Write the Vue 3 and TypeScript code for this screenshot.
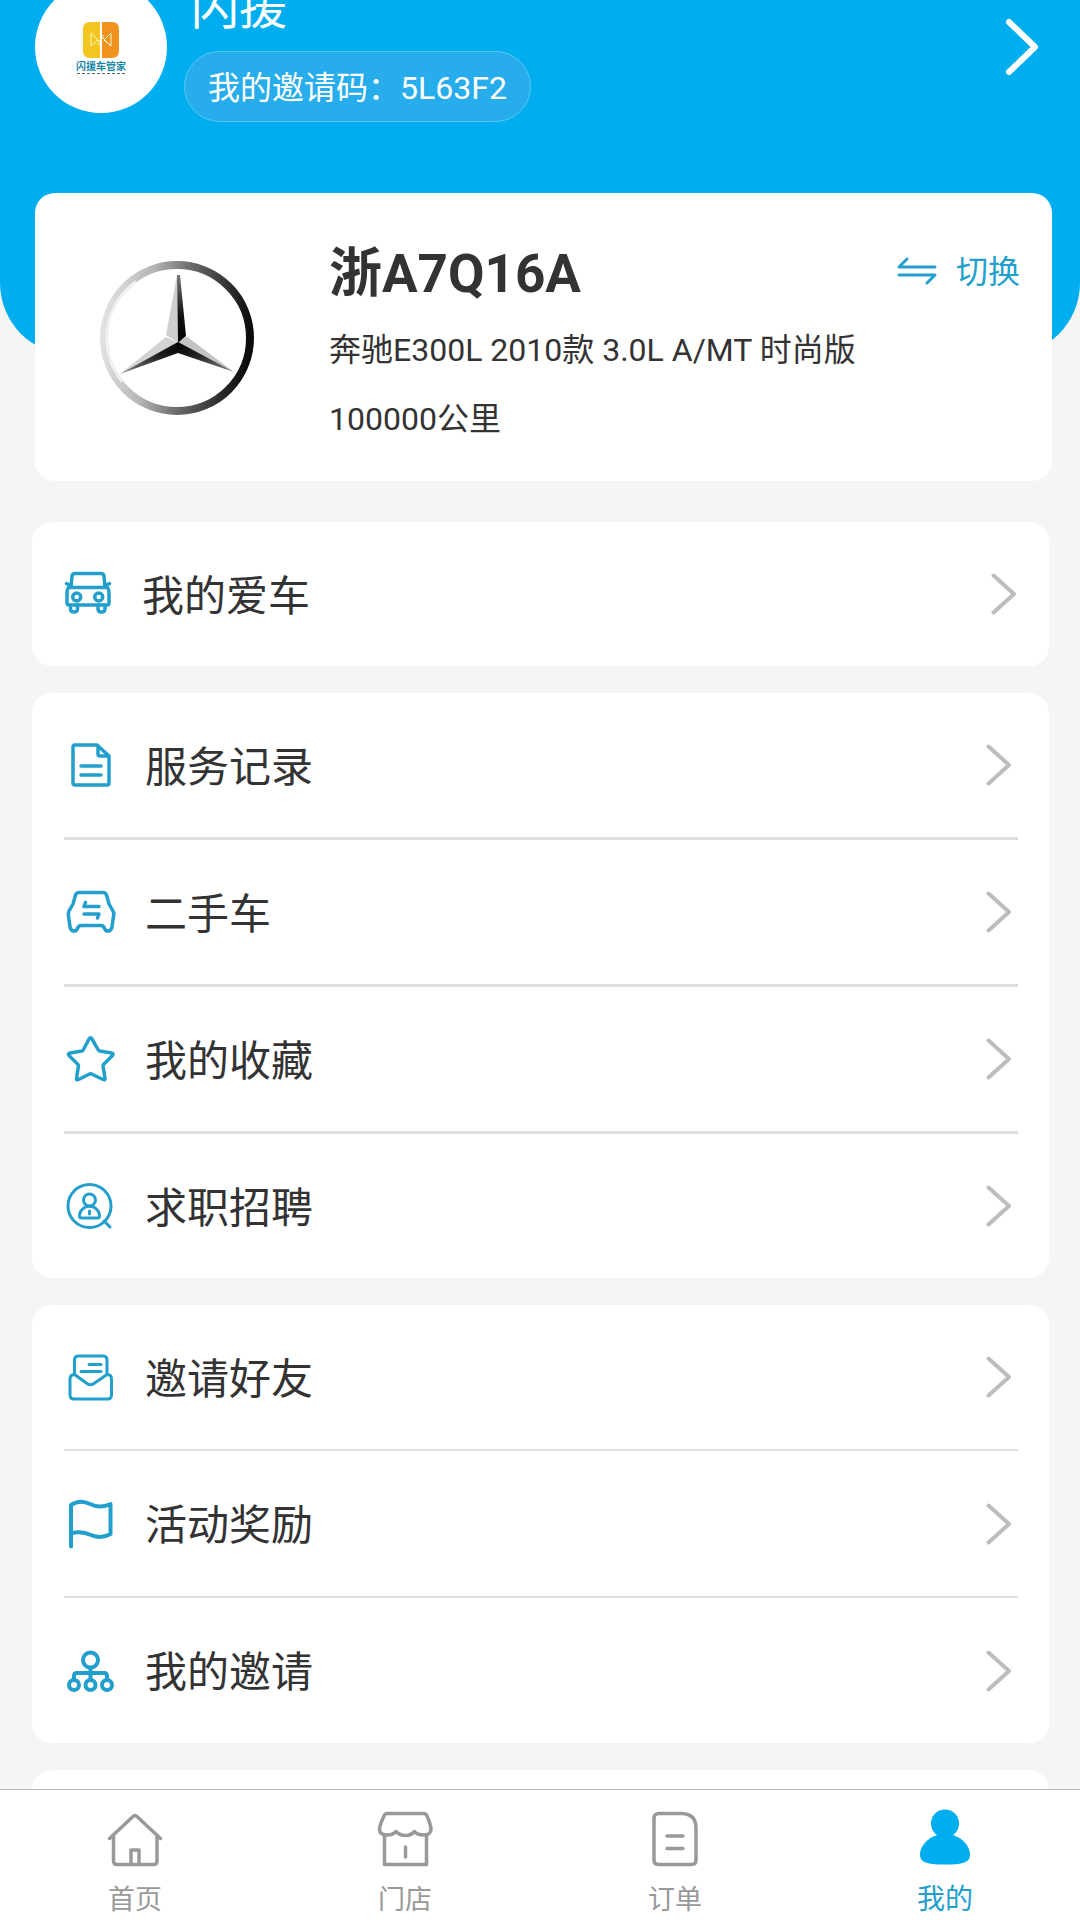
<script setup lang="ts">
import { ref } from 'vue'

type IconName = 'car' | 'doc' | 'trade' | 'star' | 'job' | 'mail' | 'flag' | 'tree'

interface MenuItem {
  icon: IconName
  label: string
}

interface MenuGroup {
  id: string
  items: MenuItem[]
}

interface Tab {
  id: 'home' | 'store' | 'order' | 'me'
  label: string
}

const groups: MenuGroup[] = [
  { id: 'single', items: [{ icon: 'car', label: '我的爱车' }] },
  {
    id: 'service',
    items: [
      { icon: 'doc', label: '服务记录' },
      { icon: 'trade', label: '二手车' },
      { icon: 'star', label: '我的收藏' },
      { icon: 'job', label: '求职招聘' },
    ],
  },
  {
    id: 'invite',
    items: [
      { icon: 'mail', label: '邀请好友' },
      { icon: 'flag', label: '活动奖励' },
      { icon: 'tree', label: '我的邀请' },
    ],
  },
  { id: 'more', items: [] },
]

const tabs: Tab[] = [
  { id: 'home', label: '首页' },
  { id: 'store', label: '门店' },
  { id: 'order', label: '订单' },
  { id: 'me', label: '我的' },
]

const activeTab = ref<Tab['id']>('me')
</script>

<template>
  <div class="app">
    <main class="content">
      <header class="hero">
        <div class="profile">
          <div class="avatar">
            <svg class="avatar-mark" viewBox="0 0 36 36" aria-hidden="true">
              <path d="M17 0H7Q0 0 0 7V29Q0 36 7 36H17Z" fill="#f3c71f" />
              <path d="M19 0H29Q36 0 36 7V29Q36 36 29 36H19Z" fill="#f0921e" />
              <path
                d="M8 11V24L15 18ZM28 11V24L21 18ZM8 11L16 19L20 16L28 24M15 23L21 13"
                fill="none"
                stroke="#fff3c4"
                stroke-width="1"
              />
            </svg>
            <span class="avatar-name">闪援车管家</span>
            <span class="avatar-line"></span>
          </div>
          <div class="identity">
            <h1 class="name">闪援</h1>
            <p class="code">我的邀请码：5L63F2</p>
          </div>
          <a class="profile-link" href="#profile" aria-label="个人资料">
            <svg width="34" height="58" viewBox="0 0 34 58">
              <path d="M4 4L30 29L4 54" fill="none" stroke="#fff" stroke-width="6" stroke-linecap="round" stroke-linejoin="round" />
            </svg>
          </a>
        </div>
      </header>

      <section class="vehicle">
        <svg class="brand" viewBox="0 0 160 160" aria-hidden="true">
          <defs>
            <linearGradient id="ring" x1="0" y1="0.4" x2="1" y2="0.5">
              <stop offset="0" stop-color="#e2e2e2" />
              <stop offset="0.3" stop-color="#b4b4b4" />
              <stop offset="0.55" stop-color="#6c6c6c" />
              <stop offset="0.85" stop-color="#2a2a2a" />
              <stop offset="1" stop-color="#0c0c0c" />
            </linearGradient>
            <linearGradient id="armTop" x1="0" y1="0" x2="0" y2="1">
              <stop offset="0" stop-color="#777" />
              <stop offset="0.6" stop-color="#111" />
              <stop offset="1" stop-color="#000" />
            </linearGradient>
            <linearGradient id="armLeft" x1="0" y1="1" x2="1" y2="0">
              <stop offset="0" stop-color="#888" />
              <stop offset="0.6" stop-color="#222" />
              <stop offset="1" stop-color="#000" />
            </linearGradient>
            <linearGradient id="armRight" x1="1" y1="1" x2="0" y2="0">
              <stop offset="0" stop-color="#888" />
              <stop offset="0.6" stop-color="#222" />
              <stop offset="1" stop-color="#000" />
            </linearGradient>
          </defs>
          <circle cx="79" cy="81" r="73" fill="none" stroke="url(#ring)" stroke-width="8" />
          <path d="M38 24A70 70 0 0 0 24 125" fill="none" stroke="#f4f4f4" stroke-width="2" />
          <path d="M79 18L68 78L80 86Z" fill="#cfcfcf" />
          <path d="M79 18H82L88 79L80 86Z" fill="url(#armTop)" />
          <path d="M68 80L22 117L80 86Z" fill="#d2d2d2" />
          <path d="M22 117L80 96V85Z" fill="url(#armLeft)" />
          <path d="M88 79L136 115L80 86Z" fill="#c4c4c4" />
          <path d="M136 115L80 96V85Z" fill="url(#armRight)" />
        </svg>
        <div class="vehicle-info">
          <div class="plate-row">
            <h2 class="plate">浙A7Q16A</h2>
            <button class="switch" type="button">
              <svg width="40" height="30" viewBox="0 0 40 30" aria-hidden="true">
                <path
                  d="M10 2L2 10H38M2 18H38L30 26"
                  fill="none"
                  stroke="currentColor"
                  stroke-width="3"
                  stroke-linecap="round"
                  stroke-linejoin="round"
                />
              </svg>
              <span>切换</span>
            </button>
          </div>
          <p class="detail">奔驰E300L 2010款 3.0L A/MT 时尚版</p>
          <p class="detail">100000公里</p>
        </div>
      </section>

      <nav class="groups" aria-label="菜单">
        <ul v-for="group in groups" :key="group.id" class="group" :class="group.id">
          <li v-for="item in group.items" :key="item.label" class="item">
            <a class="row" href="#menu">
              <svg class="icon" viewBox="0 0 48 48" aria-hidden="true">
                <g v-if="item.icon === 'car'">
                  <path d="M7 17L8 6Q8.500 3.500 11 3.500H37Q39.500 3.500 40 6L41 17" />
                  <path d="M5 17.500H43Q45 18 45 24V33Q45 35 43 35H5Q3 35 3 33V24Q3 18 5 17.500Z" />
                  <path d="M2.500 13.500L7 16M45.500 13.500L41 16" />
                  <circle cx="12.700" cy="27" r="4" />
                  <circle cx="34.700" cy="27" r="4" />
                  <path d="M6.500 35V39Q6.500 42 10 42T13.500 39V35M34 35V39Q34 42 37.500 42T41 39V35" />
                </g>
                <g v-else-if="item.icon === 'doc'">
                  <path d="M8 4H30L42 15V42Q42 44 40 44H8Q6 44 6 42V6Q6 4 8 4Z" />
                  <path d="M31 5V13Q31 15 33 15H41" />
                  <path d="M14 25H34M14 34H34" />
                </g>
                <g v-else-if="item.icon === 'trade'">
                  <path
                    d="M12 4.500H36Q38.500 4.500 39.500 7L42 16L46 23Q47.500 26 46.500 28L45 39Q44 43 41 43Q38.500 43 37.500 40.500Q36.500 37.500 34 37.500H14Q11.500 37.500 10.500 40.500Q9.500 43 7 43Q4 43 3 39L1.500 28Q1 26 2 23L6 16L8.500 7Q9.500 4.500 12 4.500Z"
                  />
                  <path d="M18.500 14.500L17 18.500H32M17 26H32L30.500 30" />
                </g>
                <g v-else-if="item.icon === 'star'">
                  <path
                    d="M22 4Q23.500 1.500 25 4L31 14.500Q31.500 15.500 32.500 16L44.500 18Q47 18.500 45.500 20.500L36.500 29.500Q36 30 36 31L38 43Q38.500 45.500 36 44.500L24.500 39Q23.500 38.500 22.500 39L11.500 44.500Q9 45.500 9.500 43L11.500 31Q11.500 30 11 29.500L2 20.500Q0.500 18.500 3 18L15 16Q16 15.500 16.500 14.500Z"
                  />
                </g>
                <g v-else-if="item.icon === 'job'" class="fine">
                  <circle cx="22.500" cy="24" r="21.500" />
                  <circle cx="22.500" cy="18" r="6" />
                  <path d="M17.500 25.500Q12.500 29 12.500 34Q12.500 36 14.500 36H30.500Q32.500 36 32.500 34Q32.500 29 27.500 25.500Q22.500 23 17.500 25.500Z" />
                  <path d="M22.500 29V32M37 39L43 45" />
                </g>
                <g v-else-if="item.icon === 'mail'" class="fine">
                  <path d="M7.500 21V7Q7.500 3 11.500 3H36Q40 3 40 7V21" />
                  <path d="M7.500 21.500L20 30.500Q23.500 33 27 30.500L40 21.500Q44.500 21.500 44.500 26V42Q44.500 46 40.500 46H7Q3 46 3 42V26Q3 21.500 7.500 21.500Z" />
                  <path d="M22 11.500H34M14 18.500H34" />
                </g>
                <g v-else-if="item.icon === 'flag'" class="bold">
                  <path d="M4 46.500V5Q13 -1 23 4T43.500 4V34Q34 39.500 24 35T4 33.500" />
                </g>
                <g v-else class="bold">
                  <circle cx="23.500" cy="13" r="7.500" />
                  <path d="M23.500 21V33M7 33V29Q7 26 10 26H37Q40 26 40 29V33" />
                  <circle cx="7" cy="38" r="5" />
                  <circle cx="23.500" cy="38" r="5" />
                  <circle cx="40" cy="38" r="5" />
                </g>
              </svg>
              <span class="label">{{ item.label }}</span>
              <svg class="chevron" width="26" height="42" viewBox="0 0 26 42" aria-hidden="true">
                <path d="M2.500 2.500L23 21L2.500 39.500" />
              </svg>
            </a>
          </li>
        </ul>
      </nav>
    </main>

    <nav class="tabbar" aria-label="主导航">
      <a
        v-for="tab in tabs"
        :key="tab.id"
        class="tab"
        :class="{ active: tab.id === activeTab }"
        :href="'#' + tab.id"
        @click="activeTab = tab.id"
      >
        <svg class="tab-icon" viewBox="0 0 60 60" aria-hidden="true">
          <g v-if="tab.id === 'home'">
            <path d="M4.500 30.500L28 8.500Q30 6.500 32 8.500L55.500 30.500M8.500 28V53Q8.500 56.500 12 56.500H48.500Q52 56.500 52 53V28" />
            <path d="M26 56V42H34V56" />
          </g>
          <g v-else-if="tab.id === 'store'">
            <path
              d="M12 5.500H49Q51 5.500 52 8Q56 17 56 22Q55 27 49 27Q42 27 39.500 23.500Q36 27.500 30.500 27.500T21 23.500Q18 27 12 27Q5 27 4.500 22Q4.500 17 9 8Q10 5.500 12 5.500Z"
            />
            <path d="M9.500 27V56.500H51.500V27M30.500 39V49" />
          </g>
          <g v-else-if="tab.id === 'order'">
            <path d="M14 5.500H37Q51 6 51 20V52Q51 56.500 46.500 56.500H13.500Q9 56.500 9 52V10.500Q9 5.500 14 5.500Z" />
            <path d="M22 28H38M22 40.500H38" />
          </g>
          <g v-else class="solid">
            <circle cx="30" cy="15.500" r="14" />
            <path d="M22 27H38C48 30 55 39 55 46C55 54 50 56.500 30 56.500S5 54 5 46C5 39 12 30 22 27Z" />
          </g>
        </svg>
        <span>{{ tab.label }}</span>
      </a>
    </nav>
  </div>
</template>

<style>
body {
  background: #f5f5f5;
}
</style>

<style scoped>
.app {
  display: flex;
  flex-direction: column;
  height: 100vh;
  overflow: hidden;
  background: #f5f5f5;
  color: #333;
  font-family: Roboto, 'Noto Sans CJK SC', sans-serif;
  font-size: 32px;
}

.app * {
  box-sizing: border-box;
}

h1,
h2,
p,
ul {
  margin: 0;
  padding: 0;
}

a {
  color: inherit;
  text-decoration: none;
}

svg {
  display: block;
  flex: none;
}

.content {
  flex: 1;
  min-height: 0;
  overflow-y: auto;
  scrollbar-width: none;
}

.hero {
  margin-top: -60px;
  padding: 32px 41px 233px 35px;
  border-radius: 0 0 72px 72px;
  background: #00aef0;
  color: #fff;
}

.profile {
  display: flex;
  align-items: center;
}

.avatar {
  display: flex;
  flex: none;
  flex-direction: column;
  align-items: center;
  width: 132px;
  height: 132px;
  padding-top: 41px;
  border-radius: 50%;
  background: #fff;
}

.avatar-mark {
  width: 36px;
  height: 36px;
}

.avatar-name {
  margin-top: 3px;
  color: #1787a8;
  font-size: 10px;
  font-weight: 700;
  line-height: 12px;
}

.avatar-line {
  width: 48px;
  border-top: 1px dashed #4a6670;
}

.identity {
  display: flex;
  flex: 1;
  flex-direction: column;
  align-items: flex-start;
  gap: 7px;
  margin-left: 17px;
}

.name {
  padding-left: 7px;
  font-size: 48px;
  font-weight: 400;
  line-height: 72px;
}

.code {
  padding: 3px 23px 0;
  border: 1px solid #56c8f2;
  border-radius: 36px;
  background: #27adeb;
  line-height: 66px;
}

.vehicle {
  display: flex;
  align-items: center;
  gap: 71px;
  margin: -162px 28px 41px 35px;
  padding: 0 32px 0 63px;
  border-radius: 20px;
  background: #fff;
}

.brand {
  width: 160px;
  height: 160px;
}

.vehicle-info {
  flex: 1;
  padding: 45px 0 27px;
}

.plate-row {
  display: flex;
  align-items: center;
  justify-content: space-between;
  margin-bottom: 10px;
}

.plate {
  padding-top: 4px;
  font-size: 53px;
  font-weight: 700;
  line-height: 64px;
}

.switch {
  display: flex;
  align-items: center;
  gap: 19px;
  padding: 0;
  border: 0;
  background: none;
  color: #229fcd;
  font: inherit;
  line-height: 40px;
}

.detail {
  line-height: 69px;
}

.groups {
  display: flex;
  flex-direction: column;
  gap: 27px;
  padding: 0 31px 0 32px;
}

.group {
  min-height: 144px;
  padding: 0 31px 0 32px;
  border-radius: 20px;
  background: #fff;
  list-style: none;
}

.item + .item {
  border-top: 3px solid #dfdfe0;
}

.invite .item + .item {
  border-top-width: 2px;
}

.row {
  display: flex;
  align-items: center;
  height: 144px;
  padding: 0 6px 0 3px;
}

.invite .item + .item .row {
  height: 145px;
}

.single .row {
  padding: 0 1px 0 0;
}

.icon {
  width: 48px;
  height: 48px;
  overflow: visible;
  fill: none;
  stroke: #229fcd;
  stroke-width: 3.500;
  stroke-linecap: round;
  stroke-linejoin: round;
}

.icon .fine {
  stroke-width: 3;
}

.icon .bold {
  stroke-width: 4;
}

.label {
  flex: 1;
  padding-top: 5px;
  margin-left: 30px;
  font-size: 42px;
  line-height: 60px;
}

.chevron {
  fill: none;
  stroke: #bdbdbd;
  stroke-width: 4;
  stroke-linecap: round;
  stroke-linejoin: round;
}

.tabbar {
  display: flex;
  flex: none;
  border-top: 1px solid #b8b8b8;
  background: #fff;
}

.tab {
  display: flex;
  flex: 1;
  flex-direction: column;
  align-items: center;
  gap: 14px;
  padding: 18px 0 2px;
  color: #999;
  font-size: 27px;
  line-height: 36px;
}

.tab.active {
  color: #229fcd;
  font-size: 28px;
}

.tab-icon {
  width: 60px;
  height: 60px;
  fill: none;
  stroke: #999;
  stroke-width: 3.500;
  stroke-linecap: round;
  stroke-linejoin: round;
}

.tab-icon .solid {
  fill: #00aef0;
  stroke: none;
}
</style>
